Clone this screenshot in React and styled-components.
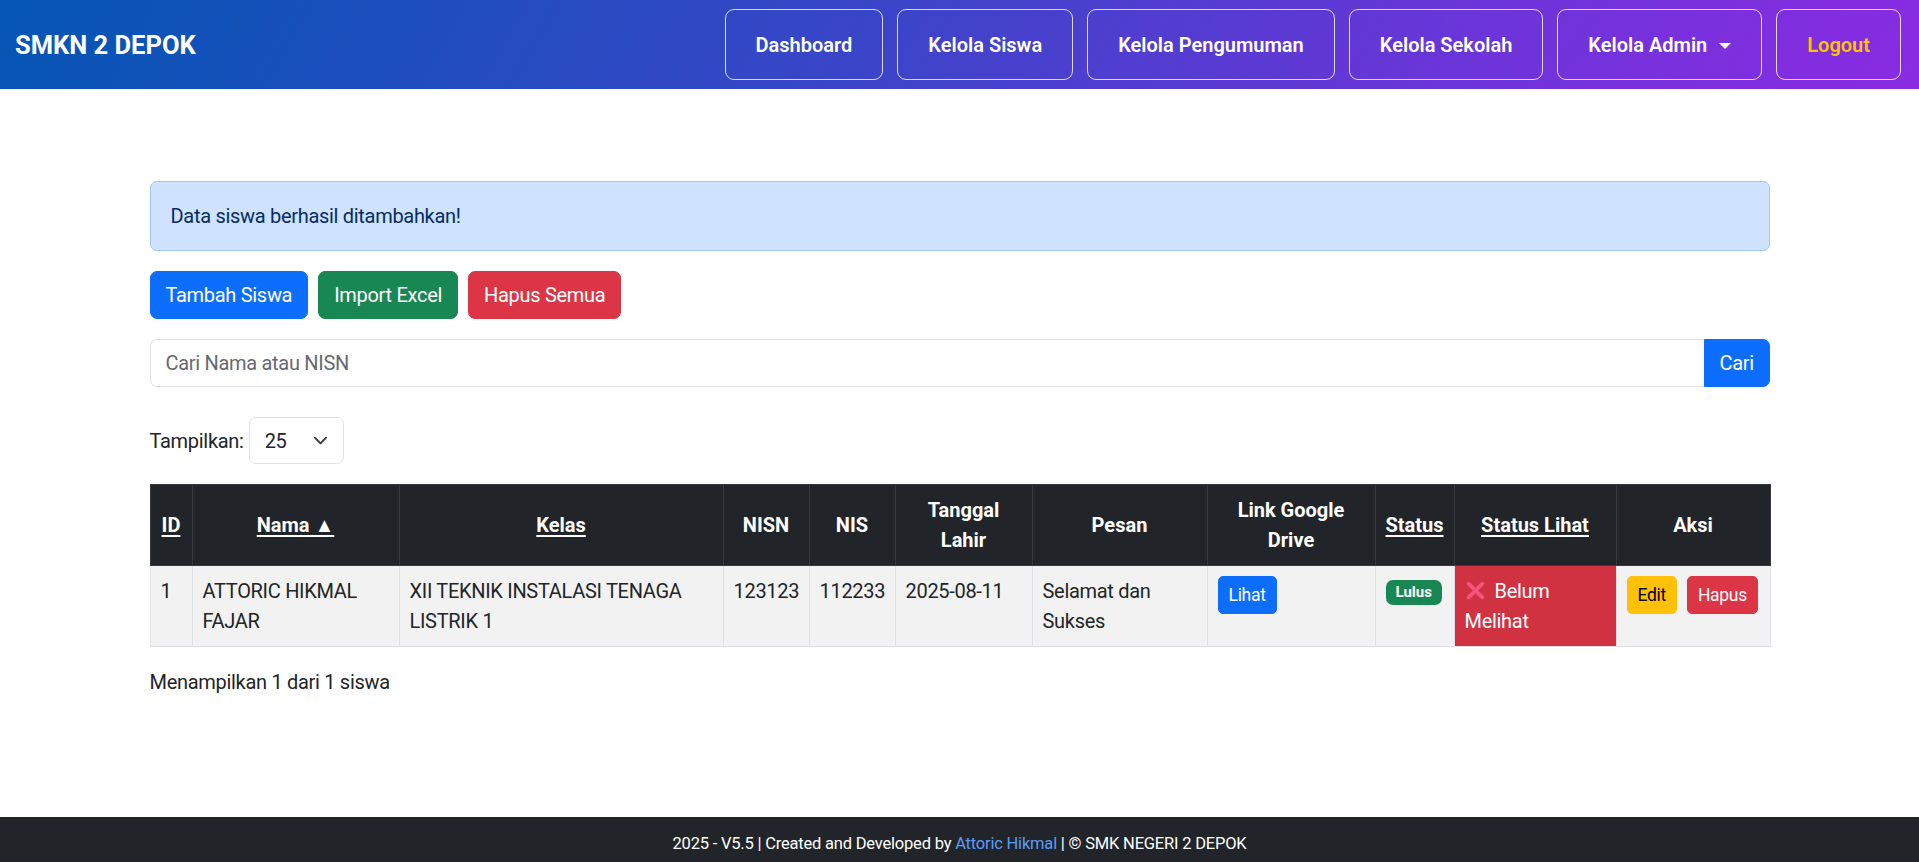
import React from 'react'
import styled, { createGlobalStyle } from 'styled-components'

const FONT = `"Segoe UI", Roboto, "Noto Sans", "Liberation Sans", sans-serif`;

const GlobalStyle = createGlobalStyle`
  * { box-sizing: border-box; }
  body {
    margin: 0;
    font-family: ${FONT};
    font-size: 20px;
    line-height: 30px;
    letter-spacing: -0.3px;
    color: #212529;
    background: #fff;
  }
`;

const Page = styled.div`
  display: flex;
  flex-direction: column;
`;

const Navbar = styled.nav`
  display: flex;
  align-items: center;
  justify-content: space-between;
  height: 89px;
  padding: 0 18px 0 15px;
  background: linear-gradient(120deg, #0456b4 0%, #3a45c8 45%, #6a35d8 75%, #8a2be2 100%);
  letter-spacing: 0;
`;

const Brand = styled.a`
  color: #fff;
  font-size: 25.5px;
  font-weight: 700;
  text-decoration: none;
`;

const NavList = styled.div`
  display: flex;
  gap: 14px;
`;

const NavButton = styled.a`
  display: flex;
  align-items: center;
  height: 71px;
  padding: 0 30px;
  border: 1px solid rgba(255, 255, 255, 0.8);
  border-radius: 9px;
  color: ${({ $warn }) => ($warn ? '#ffc107' : '#fff')};
  font-size: 20px;
  font-weight: 600;
  text-decoration: none;
  white-space: nowrap;
`;

const Caret = styled.span`
  display: inline-block;
  margin-left: 12px;
  margin-top: 2px;
  border-top: 6px solid #fff;
  border-left: 6px solid transparent;
  border-right: 6px solid transparent;
`;

const Main = styled.main`
  min-height: calc(100vh - 134px);
  padding-top: 92px;
`;

const Container = styled.div`
  width: 1620px;
  margin: 0 auto;
`;

const Alert = styled.div`
  padding: 19px 20px;
  margin-bottom: 20px;
  background: #cfe2ff;
  border: 1px solid #9ec5fe;
  border-radius: 7px;
  color: #052c65;
`;

const ButtonRow = styled.div`
  display: flex;
  gap: 10px;
  margin-bottom: 20px;
`;

const Button = styled.button`
  font-family: ${FONT};
  font-size: ${({ $sm }) => ($sm ? '17.5px' : '20px')};
  line-height: ${({ $sm }) => ($sm ? '26px' : '30px')};
  letter-spacing: -0.3px;
  padding: ${({ $sm }) => ($sm ? '5px 10px' : '8px 15px')};
  border: 1px solid ${({ $bg }) => $bg};
  border-radius: ${({ $sm }) => ($sm ? '5px' : '7px')};
  background: ${({ $bg }) => $bg};
  color: ${({ $fg }) => $fg || '#fff'};
  cursor: pointer;
`;

const SearchGroup = styled.form`
  display: flex;
  margin-bottom: 30px;
`;

const SearchInput = styled.input`
  flex: 1;
  font-family: ${FONT};
  font-size: 20px;
  line-height: 30px;
  letter-spacing: -0.3px;
  padding: 8px 15px;
  border: 1px solid #dee2e6;
  border-right: none;
  border-radius: 7px 0 0 7px;
  outline: none;
  color: #212529;

  &::placeholder {
    color: #656a6f;
  }
`;

const SearchButton = styled(Button)`
  border-radius: 0 7px 7px 0;
  width: 66px;
`;

const PerPage = styled.div`
  display: flex;
  align-items: center;
  gap: 5px;
  margin-bottom: 20px;
`;

const SelectBox = styled.div`
  display: flex;
  align-items: center;
  justify-content: space-between;
  width: 95px;
  height: 47px;
  padding: 0 15px;
  border: 1px solid #dee2e6;
  border-radius: 7px;
  background: #fff;
`;

const Table = styled.table`
  width: 1620px;
  table-layout: fixed;
  border-collapse: collapse;
  margin-bottom: 20px;
`;

const Th = styled.th`
  width: ${({ $w }) => $w}px;
  padding: 10px 10px;
  background: #212529;
  color: #fff;
  border: 1px solid #373b3e;
  font-weight: 700;
  letter-spacing: 0;
  text-align: center;
  vertical-align: middle;
`;

const SortLink = styled.a`
  color: #fff;
  text-decoration: underline;
  text-underline-offset: 3px;
  text-decoration-thickness: 2px;
`;

const Td = styled.td`
  padding: 10px 10px;
  background: ${({ $danger }) => ($danger ? '#d13242' : '#f2f2f2')};
  color: ${({ $danger }) => ($danger ? '#fff' : '#212529')};
  border: 1px solid #dee2e6;
  vertical-align: top;
  white-space: ${({ $nowrap }) => ($nowrap ? 'nowrap' : 'normal')};
`;

const Badge = styled.span`
  display: inline-block;
  padding: 4px 10px;
  font-size: 15px;
  line-height: 17px;
  font-weight: 700;
  letter-spacing: 0;
  color: #fff;
  background: #198754;
  border-radius: 7px;
  vertical-align: 1px;
`;

const Actions = styled.div`
  display: flex;
  gap: 10px;
`;

const CrossIcon = styled.svg`
  width: 21px;
  height: 21px;
  margin-right: 9px;
  vertical-align: -3px;
`;

const Footer = styled.footer`
  height: 45px;
  padding-top: 14px;
  background: #212529;
  color: #fff;
  text-align: center;
  font-size: 16.5px;
  line-height: 26px;
  letter-spacing: -0.2px;
`;

const FooterLink = styled.a`
  color: #5b9cf8;
  text-decoration: none;
`;

const columns = [
  { label: 'ID', w: 42, sort: true },
  { label: 'Nama ▲', w: 207, sort: true },
  { label: 'Kelas', w: 324, sort: true },
  { label: 'NISN', w: 86 },
  { label: 'NIS', w: 86 },
  { label: 'Tanggal Lahir', w: 137 },
  { label: 'Pesan', w: 175 },
  { label: 'Link Google Drive', w: 168 },
  { label: 'Status', w: 79, sort: true },
  { label: 'Status Lihat', w: 162, sort: true },
  { label: 'Aksi', w: 154 },
];

const Chevron = () => (
  <svg width="15" height="15" viewBox="0 0 16 16" fill="none">
    <path d="m2 5 6 6 6-6" stroke="#343a40" strokeWidth="2" strokeLinecap="round" strokeLinejoin="round" />
  </svg>
);

const App = () => {
  return (
    <Page>
      <GlobalStyle />
      <Navbar>
        <Brand href="#">SMKN 2 DEPOK</Brand>
        <NavList>
          <NavButton href="#">Dashboard</NavButton>
          <NavButton href="#">Kelola Siswa</NavButton>
          <NavButton href="#">Kelola Pengumuman</NavButton>
          <NavButton href="#">Kelola Sekolah</NavButton>
          <NavButton href="#">Kelola Admin<Caret /></NavButton>
          <NavButton href="#" $warn>Logout</NavButton>
        </NavList>
      </Navbar>

      <Main>
        <Container>
          <Alert>Data siswa berhasil ditambahkan!</Alert>

          <ButtonRow>
            <Button $bg="#0d6efd">Tambah Siswa</Button>
            <Button $bg="#198754">Import Excel</Button>
            <Button $bg="#dc3545">Hapus Semua</Button>
          </ButtonRow>

          <SearchGroup onSubmit={(e) => e.preventDefault()}>
            <SearchInput placeholder="Cari Nama atau NISN" />
            <SearchButton $bg="#0d6efd">Cari</SearchButton>
          </SearchGroup>

          <PerPage>
            <span>Tampilkan:</span>
            <SelectBox>
              <span>25</span>
              <Chevron />
            </SelectBox>
          </PerPage>

          <Table>
            <thead>
              <tr>
                {columns.map((c) => (
                  <Th key={c.label} $w={c.w}>
                    {c.sort ? <SortLink href="#">{c.label}</SortLink> : c.label}
                  </Th>
                ))}
              </tr>
            </thead>
            <tbody>
              <tr>
                <Td>1</Td>
                <Td>ATTORIC HIKMAL FAJAR</Td>
                <Td>XII TEKNIK INSTALASI TENAGA LISTRIK 1</Td>
                <Td>123123</Td>
                <Td>112233</Td>
                <Td $nowrap>2025-08-11</Td>
                <Td>Selamat dan Sukses</Td>
                <Td><Button $sm $bg="#0d6efd">Lihat</Button></Td>
                <Td><Badge>Lulus</Badge></Td>
                <Td $danger>
                  <CrossIcon viewBox="0 0 20 20">
                    <path d="M3.5 3.5 16.5 16.5M16.5 3.5 3.5 16.5" stroke="#f4557c" strokeWidth="3.6" strokeLinecap="round" />
                  </CrossIcon>
                  Belum Melihat
                </Td>
                <Td>
                  <Actions>
                    <Button $sm $bg="#ffc107" $fg="#000">Edit</Button>
                    <Button $sm $bg="#dc3545">Hapus</Button>
                  </Actions>
                </Td>
              </tr>
            </tbody>
          </Table>

          <div>Menampilkan 1 dari 1 siswa</div>
        </Container>
      </Main>

      <Footer>
        2025 - V5.5 | Created and Developed by <FooterLink href="#">Attoric Hikmal</FooterLink> | © SMK NEGERI 2 DEPOK
      </Footer>
    </Page>
  )
}

export default App
